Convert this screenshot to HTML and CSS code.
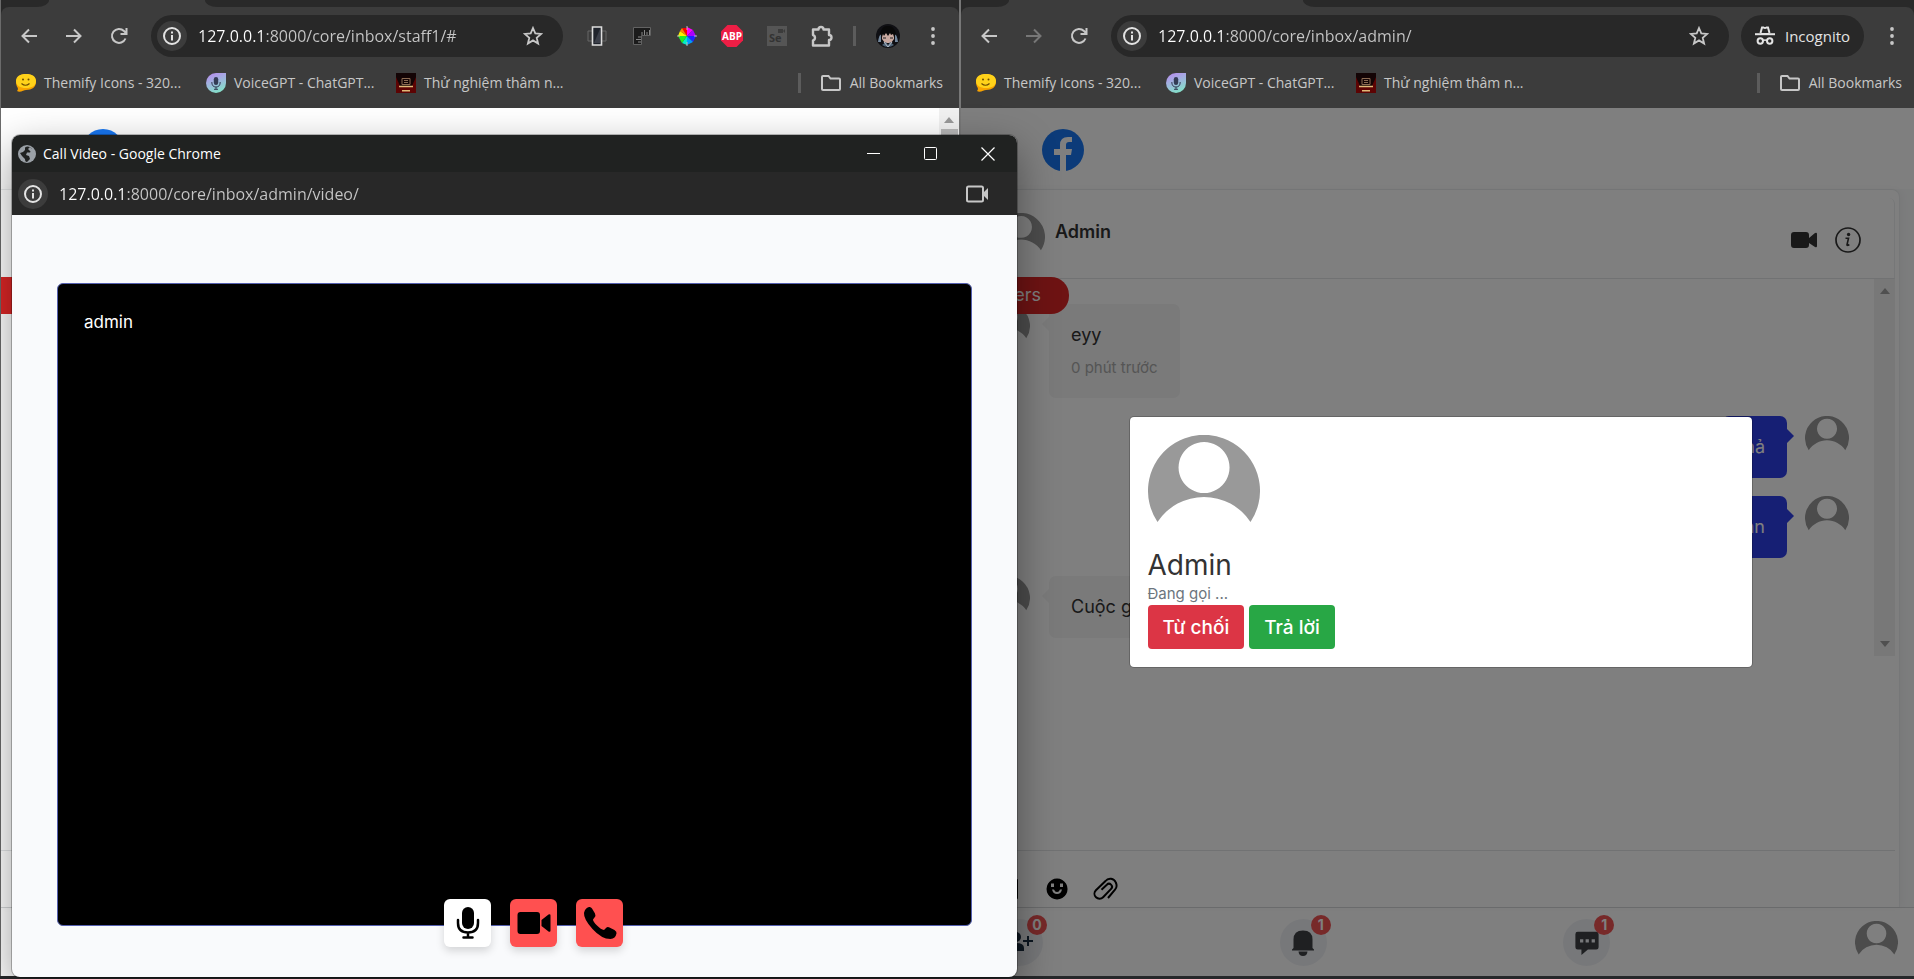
FILE: index.html
```html
<!DOCTYPE html>
<html lang="vi">
<head>
<meta charset="utf-8">
<title>Call Video</title>
<link rel="stylesheet" href="styles.css">
</head>
<body>
<svg class="sprite" aria-hidden="true">
  <symbol id="back" viewBox="0 0 20 20"><path d="M18 10H4M10 3.5 3.5 10l6.500 6.500" fill="none" stroke="currentColor" stroke-width="2"/></symbol>
  <symbol id="forward" viewBox="0 0 20 20"><path d="M2 10h14M10 3.500 16.500 10 10 16.500" fill="none" stroke="currentColor" stroke-width="2"/></symbol>
  <symbol id="reload" viewBox="0 0 20 20"><path d="M16.500 12.500A7 7 0 1 1 15 5l2 2M17.500 2v6h-6" fill="none" stroke="currentColor" stroke-width="2"/></symbol>
  <symbol id="info" viewBox="0 0 20 20"><circle cx="10" cy="10" r="8" fill="none" stroke="currentColor" stroke-width="2"/><path d="M9 9h2v5.500H9zM9 5.500h2v2H9z" fill="currentColor"/></symbol>
  <symbol id="star" viewBox="0 0 20 20"><path d="m10 2 2.300 5.400 5.900.5-4.500 3.900 1.400 5.700L10 14.400l-5.100 3.100 1.400-5.700L1.800 7.900l5.900-.5z" fill="none" stroke="currentColor" stroke-width="1.800"/></symbol>
  <symbol id="kebab" viewBox="0 0 20 20"><g fill="currentColor"><circle cx="10" cy="3" r="1.900"/><circle cx="10" cy="10" r="1.900"/><circle cx="10" cy="17" r="1.900"/></g></symbol>
  <symbol id="folder" viewBox="0 0 22 18"><path d="M3 2h5.500l2 2.500H19q1 0 1 1V15q0 1-1 1H3q-1 0-1-1V3q0-1 1-1z" fill="none" stroke="currentColor" stroke-width="2"/></symbol>
  <symbol id="puzzle" viewBox="0 0 24 24"><path d="M3 5.500h5.500a2.500 2.500 0 0 1 5 0h5.500v5.500a2.500 2.500 0 0 1 0 5v5.500H3v-5.200a2.700 2.700 0 0 0 0-5.200z" fill="none" stroke="currentColor" stroke-width="2.400" stroke-linejoin="round"/></symbol>
  <symbol id="smile" viewBox="0 0 20 20"><path d="M10 1c6 0 10 3 10 8s-4 8-10 8c-2 0-6 3-9 1 1-1 1-2 .8-3C.5 13 0 11 0 9c0-5 4-8 10-8z" fill="#f9a400"/><path d="M10 1c6 0 10 2.500 10 7s-4 7-10 7S0 12.500 0 8s4-7 10-7z" fill="#ffd21a"/><path d="M5.500 10.500q4 3.500 8 0" fill="none" stroke="#6b4a00" stroke-width="1.200"/><circle cx="7" cy="6.500" r="1" fill="#6b4a00"/><circle cx="12.500" cy="6.500" r="1" fill="#6b4a00"/></symbol>
  <symbol id="voice" viewBox="0 0 20 20"><linearGradient id="vg" x1="0" y1="0" x2=".4" y2="1"><stop stop-color="#bb86f2"/><stop offset="1" stop-color="#86dccb"/></linearGradient><path d="M10 0h10v10a10 10 0 1 1-10-10z" fill="url(#vg)"/><rect x="7.800" y="4" width="4.400" height="8" rx="2.200" fill="#333b55"/><path d="M5.800 9q0 5 4.200 5t4.200-5M10 14v2.500M8 16.300h4" fill="none" stroke="#333b55"/></symbol>
  <symbol id="scan" viewBox="0 0 20 20"><path fill="#5d0303" d="M0 0h20v20H0z"/><path fill="#130405" d="M0 0h20v4l-4 9H4L0 4z"/><path d="M6 5.500h8v6H6zM8 7.500h4M8 9.500h4" fill="none" stroke="#8a6a52"/><path d="M3 13.500h14M6 17.800h8" stroke="#e0b978" stroke-width="1.500"/></symbol>
  <symbol id="avatar" viewBox="0 0 112 112"><path fill="#999" fill-rule="evenodd" d="M9.500 87A56 56 0 1 1 102.500 87 55.700 55.700 0 0 0 9.500 87zM56 7a25.500 25.500 0 1 0 .1 0z"/></symbol>
  <symbol id="facebook" viewBox="0 0 42 42"><circle cx="21" cy="21" r="21" fill="#1877f2"/><path d="M18 42V26h-6v-6h6v-4q0-8 8-8h4v5h-3q-3 0-3 3v4h6l-1 6h-5v16z" fill="#fff"/></symbol>
  <symbol id="up" viewBox="0 0 10 6"><path d="M0 6 5 0l5 6z" fill="currentColor"/></symbol>
</svg>

<main class="desktop">
  <section class="window window-left" aria-label="staff1">
    <div class="tabs"><span class="tab-before"></span><span class="tab-after tab-after-near"></span></div>
    <div class="chrome">
      <div class="toolbar">
        <button class="icon-button" aria-label="Back"><svg><use href="#back"/></svg></button>
        <button class="icon-button" aria-label="Forward"><svg><use href="#forward"/></svg></button>
        <button class="icon-button" aria-label="Reload"><svg><use href="#reload"/></svg></button>
        <div class="omnibox">
          <button class="site-info" aria-label="Site information"><svg><use href="#info"/></svg></button>
          <input class="url" type="text" aria-label="Address" value="127.0.0.1:8000/core/inbox/staff1/#">
          <button class="bookmark-star" aria-label="Bookmark"><svg><use href="#star"/></svg></button>
        </div>
        <div class="extensions">
          <button class="icon-button" aria-label="Mobile view"><svg viewBox="0 0 20 20"><path d="M1 5h18v10H1z" fill="none" stroke="#666"/><path d="M5.500 1h9v18h-9z" fill="#20242c" stroke="#ddd" stroke-width="1.600"/><path d="m7 17 6-14v14z" fill="#3b3f49"/></svg></button>
          <button class="icon-button" aria-label="Ruler"><svg viewBox="0 0 20 20"><path d="M1.500 1.500h17v8h-9v9h-8z" fill="#1b1b1b" stroke="#626262"/><path d="M10 9V6m2.500 3V4M15 9V6m2.500 3V4M9 11H6m3 2.500H4M9 16H6" stroke="#888"/></svg></button>
          <button class="icon-button" aria-label="Color picker"><svg viewBox="0 0 20 20"><g><path fill="#f00" d="M10 10 5 2h5z"/><path fill="#f0f" d="M10 10V1l6 3z"/><path fill="#a0f" d="m10 10 6-6 3 6z"/><path fill="#22f" d="M10 10h9l-3 6z"/><path fill="#09f" d="m10 10 6 6-6 3z"/><path fill="#0ec" d="M10 10v9l-5-2z"/><path fill="#2e2" d="m10 10-5 7-4-7z"/><path fill="#fe0" d="M10 10H1l2-5z"/><path fill="#f80" d="M10 10 3 5l2-3z"/></g><path d="M10 0v4M10 16v4M0 10h3M17 10h3" stroke="#bbb"/></svg></button>
          <button class="icon-button" aria-label="Adblock"><svg class="abp" viewBox="0 0 22 22"><path d="M6.500 0h9L22 6.500v9L15.500 22h-9L0 15.500v-9z" fill="#ed1e45"/><text x="11" y="14.500" text-anchor="middle" class="abp-text">ABP</text></svg></button>
          <button class="icon-button" aria-label="Selenium"><svg viewBox="0 0 20 20"><path d="M0 0h20v20H0z" fill="#555"/><path d="M11 3h5v4h-5zM16 5l2-2v4z" fill="#3b3b3b"/><text x="2" y="16" class="se-text">Se</text></svg></button>
          <button class="icon-button" aria-label="Extensions"><svg class="puzzle"><use href="#puzzle"/></svg></button>
          <span class="tool-divider"></span>
          <button class="icon-button" aria-label="Profile"><svg class="profile" viewBox="0 0 24 24"><circle cx="12" cy="12" r="12" fill="#101014"/><path d="M2 18q1-7 3-8v8zM22 18q-1-7-3-8v8z" fill="#73879c"/><path d="M6 9h12v6l-3 4H9l-3-4z" fill="#c9a9a0"/><path d="M4 10q2-9 8-8 6-1 8 8l-2 3-1-3-2 1-1-2-2 3-2-3-2 3-1-2-1 3z" fill="#090909"/><path d="M7 14h3M14 14h3" stroke="#222"/><path d="m6 21 4-3 2 3 2-3 4 3q-6 4-12 0z" fill="#4f6478"/><path d="m8 18 4 5 4-5" fill="none" stroke="#b3bdc7"/></svg></button>
          <button class="icon-button" aria-label="Menu"><svg><use href="#kebab"/></svg></button>
        </div>
      </div>
      <nav class="bookmarks" aria-label="Bookmarks">
        <a class="bookmark" href="#"><svg><use href="#smile"/></svg>Themify Icons - 320...</a>
        <a class="bookmark" href="#"><svg><use href="#voice"/></svg>VoiceGPT - ChatGPT...</a>
        <a class="bookmark" href="#"><svg><use href="#scan"/></svg>Thử nghiệm thâm n...</a>
        <a class="all-bookmarks" href="#"><svg><use href="#folder"/></svg>All Bookmarks</a>
      </nav>
    </div>
    <div class="page">
      <header class="site-header"><svg class="logo"><use href="#facebook"/></svg></header>
      <div class="chat-card">
        <div class="chat-head"></div>
        <div class="ribbon"></div>
        <div class="chat-body"></div>
        <div class="composer"></div>
      </div>
      <div class="bottom-nav"></div>
      <div class="page-scroll"><svg><use href="#up"/></svg><span class="thumb"></span></div>
    </div>
  </section>

  <section class="window window-right" aria-label="admin">
    <div class="tabs"><span class="tab-before"></span><span class="tab-after tab-after-far"></span></div>
    <div class="chrome">
      <div class="toolbar">
        <button class="icon-button" aria-label="Back"><svg><use href="#back"/></svg></button>
        <button class="icon-button dim" aria-label="Forward"><svg><use href="#forward"/></svg></button>
        <button class="icon-button" aria-label="Reload"><svg><use href="#reload"/></svg></button>
        <div class="omnibox">
          <button class="site-info" aria-label="Site information"><svg><use href="#info"/></svg></button>
          <input class="url" type="text" aria-label="Address" value="127.0.0.1:8000/core/inbox/admin/">
          <button class="bookmark-star" aria-label="Bookmark"><svg><use href="#star"/></svg></button>
        </div>
        <button class="incognito"><svg viewBox="0 0 20 20"><path d="M5.500 7 7 1.500h1.500q1.500 1 3 0H13L14.500 7" fill="none" stroke="currentColor" stroke-width="2"/><path d="M0 8.200h20" stroke="currentColor" stroke-width="2"/><path d="M5.500 7h9v1h-9z" fill="currentColor"/><circle cx="5.300" cy="15" r="2.700" fill="none" stroke="currentColor" stroke-width="2"/><circle cx="14.700" cy="15" r="2.700" fill="none" stroke="currentColor" stroke-width="2"/><path d="M8 14.500q2-1 4 0" fill="none" stroke="currentColor" stroke-width="1.500"/></svg>Incognito</button>
        <button class="icon-button menu-end" aria-label="Menu"><svg><use href="#kebab"/></svg></button>
      </div>
      <nav class="bookmarks" aria-label="Bookmarks">
        <a class="bookmark" href="#"><svg><use href="#smile"/></svg>Themify Icons - 320...</a>
        <a class="bookmark" href="#"><svg><use href="#voice"/></svg>VoiceGPT - ChatGPT...</a>
        <a class="bookmark" href="#"><svg><use href="#scan"/></svg>Thử nghiệm thâm n...</a>
        <a class="all-bookmarks" href="#"><svg><use href="#folder"/></svg>All Bookmarks</a>
      </nav>
    </div>
    <div class="page">
      <header class="site-header"><svg class="logo"><use href="#facebook"/></svg></header>
      <div class="chat-card">
        <div class="chat-head">
          <svg class="head-avatar"><use href="#avatar"/></svg>
          <h2 class="chat-name">Admin</h2>
          <button class="head-action" aria-label="Video call"><svg viewBox="0 0 26 26"><path d="M3 5h12q3 0 3 3v10q0 3-3 3H3q-3 0-3-3V8q0-3 3-3zM18 11l6-5q2-1 2 1v12q0 2-2 1l-6-4z" fill="#333"/></svg></button>
          <button class="head-action" aria-label="Details"><svg viewBox="0 0 26 26"><circle cx="13" cy="13" r="12" fill="none" stroke="#333" stroke-width="1.700"/><circle cx="13.600" cy="7.500" r="1.700" fill="#333"/><path d="M10.500 11.300h3l-1.500 6.500q.2 1.200 2.300-.3" fill="none" stroke="#333" stroke-width="1.600"/></svg></button>
        </div>
        <div class="ribbon">Users</div>
        <div class="chat-body">
          <div class="messages">
            <div class="message">
              <svg class="message-avatar"><use href="#avatar"/></svg>
              <div class="bubble received"><p class="text">eyy</p><time class="time">0 phút trước</time></div>
            </div>
            <div class="message mine">
              <div class="bubble sent"><p class="text">hả</p></div>
              <svg class="message-avatar"><use href="#avatar"/></svg>
            </div>
            <div class="message mine">
              <div class="bubble sent"><p class="text">bạn</p></div>
              <svg class="message-avatar"><use href="#avatar"/></svg>
            </div>
            <div class="message">
              <svg class="message-avatar"><use href="#avatar"/></svg>
              <div class="bubble received"><p class="text">Cuộc gọi</p></div>
            </div>
          </div>
          <div class="message-scroll"><svg><use href="#up"/></svg><svg class="down"><use href="#up"/></svg></div>
        </div>
        <div class="composer">
          <button class="tool" aria-label="Picture"><svg viewBox="0 0 24 24"><path d="M3 2h17q1 0 1 1v18q0 1-1 1H3z"/></svg></button>
          <button class="tool" aria-label="Emoji"><svg viewBox="0 0 24 24"><path fill-rule="evenodd" d="M12 1.500a10.500 10.500 0 1 0 .1 0zM6 6.500h3V10H6zM15 6.500h3V10h-3zM7 12.500h2q1 2.500 3 2.500t3-2.500h2q-1 4.500-5 4.500t-5-4.500z"/></svg></button>
          <button class="tool clip" aria-label="Attach"><svg viewBox="0 0 26 24"><path d="M8.500 12.700l5.300-5a3 3 0 0 1 4.300 4.200l-8 8.300a5 5 0 0 1-7.200-7L12.500 4a6 6 0 0 1 10.300 1.500q2 4-.8 7.200L15 21" fill="none" stroke="#000" stroke-width="2"/></svg></button>
        </div>
      </div>
      <nav class="bottom-nav" aria-label="Main">
        <button class="nav-item" aria-label="Friend requests"><svg viewBox="0 0 26 26"><circle cx="9" cy="7" r="5" fill="#1b2f42"/><path d="M1 21v-3q0-5 8-5t8 5v3zM20 6h2v4h4v2h-4v4h-2v-4h-4v-2h4z" fill="#1b2f42"/></svg><span class="badge">0</span></button>
        <button class="nav-item" aria-label="Notifications"><svg viewBox="0 0 26 26"><path d="M3.500 18V9.500q0-9 9.500-9t9.500 9V18l1.500 1.500v1H2v-1zM8.500 21.500h9q-.5 4.500-4.500 4.500t-4.500-4.500z" fill="#3e4045"/></svg><span class="badge">1</span></button>
        <button class="nav-item" aria-label="Messages"><svg viewBox="0 0 26 28"><path fill-rule="evenodd" d="M3 2h20q2.500 0 2.500 2.500v14q0 2.500-2.500 2.500h-9l-7 6v-6H3q-2.500 0-2.500-2.500v-14Q.5 2 3 2zM5.500 10v3.500H9V10zM11.500 10v3.500H15V10zM18 10v3.500h3.500V10z" fill="#3e4045"/></svg><span class="badge">1</span></button>
        <button class="nav-avatar" aria-label="Account"><svg><use href="#avatar"/></svg></button>
      </nav>
      <div class="overlay">
        <div class="modal" role="dialog" aria-label="Incoming call">
          <svg class="caller-avatar"><use href="#avatar"/></svg>
          <h1 class="caller">Admin</h1>
          <p class="calling">Đang gọi ...</p>
          <div class="modal-actions">
            <button class="decision decline">Từ chối</button>
            <button class="decision accept">Trả lời</button>
          </div>
        </div>
      </div>
    </div>
  </section>

  <section class="popup" aria-label="Call Video">
    <div class="popup-title">
      <svg class="globe" viewBox="0 0 18 18"><circle cx="9" cy="9" r="9" fill="#9aa0a6"/><path d="M9 1.500q4 0 5 3l-2 3H9L8 10l3 1 1 3-3 3q-2 0-2-3l-3-3-2-3 3-1 2-2V2.500z" fill="#202221"/><path d="m10 4 2-2 3 3-2 2z" fill="#9aa0a6"/></svg>
      <span class="popup-name">Call Video - Google Chrome</span>
      <button class="window-button" aria-label="Minimize"><svg viewBox="0 0 14 14"><path d="M0 6.500h13" stroke="#fff"/></svg></button>
      <button class="window-button" aria-label="Maximize"><svg viewBox="0 0 14 14"><rect x=".5" y=".5" width="12" height="12" rx="1" fill="none" stroke="#fff"/></svg></button>
      <button class="window-button" aria-label="Close"><svg viewBox="0 0 14 14"><path d="m.5.5 13 13M13.500.5l-13 13" stroke="#fff" stroke-width="1.200"/></svg></button>
    </div>
    <div class="popup-address">
      <button class="site-info" aria-label="Site information"><svg><use href="#info"/></svg></button>
      <input class="url" type="text" aria-label="Popup address" value="127.0.0.1:8000/core/inbox/admin/video/">
      <button class="camera" aria-label="Camera"><svg viewBox="0 0 22 18"><rect x="1" y="1.500" width="16" height="15" rx="1.500" fill="none" stroke="currentColor" stroke-width="2"/><path d="m17 8 5-5v12l-5-5z" fill="currentColor"/></svg></button>
    </div>
    <div class="call">
      <div class="video"><span class="participant">admin</span></div>
      <div class="call-controls">
        <button class="call-button" aria-label="Microphone"><svg viewBox="0 0 34 34"><rect x="11" y="1" width="12" height="22" rx="6"/><path d="M7 14v3q0 9.500 10 9.500T27 17v-3M17 26.500V31M12.500 31.500h9" fill="none" stroke="#000" stroke-width="2.500" stroke-linecap="round"/></svg></button>
        <button class="call-button alert" aria-label="Camera off"><svg viewBox="0 0 34 34"><path d="M3.500 6H20q3 0 3 3v16q0 3-3 3H3.500q-3 0-3-3V9q0-3 3-3zM24.500 14l7-5.500q2-1 2 1v15q0 2-2 1l-7-5.500z"/></svg></button>
        <button class="call-button alert" aria-label="Hang up"><svg viewBox="0 0 34 34"><path d="M1 7q1-5 5-6 2-.4 3 1.500l3 5q1 2-.5 4L10 13.500q0 2 4 6t7 4.500l2-2q1.500-1.500 3.500-.5l5 2.500q2.500 1.500 2 3.500-1 5-6 5.500-9 0-18-10T1 7z"/></svg></button>
      </div>
    </div>
  </section>
</main>
</body>
</html>
```

FILE: styles.css
```css
* { box-sizing: border-box; }

body {
  margin: 0;
  background: #26282a;
  font-family: Inter, "Liberation Sans", sans-serif;
  font-size: 18px;
}

button {
  padding: 0;
  border: 0;
  background: none;
  color: inherit;
  font: inherit;
}

svg { display: block; flex: none; }
p, h1, h2 { margin: 0; }
.sprite { position: absolute; width: 0; height: 0; }

.desktop {
  position: relative;
  display: grid;
  grid-template-columns: 961fr 953fr;
  height: 100vh;
  padding-bottom: 3px;
  overflow: hidden;
}

.window {
  display: flex;
  flex-direction: column;
  min-width: 0;
  background: #292929;
}
.window-left {
  border-left: 1px solid #6b6b6b;
  border-right: 2px solid #777;
}

/* Browser frame */
.tabs {
  display: flex;
  justify-content: space-between;
  height: 7px;
  background: #3c3c3c;
}
.tab-before {
  width: 48px;
  background: #292929;
  border-bottom-right-radius: 12px 7px;
}
.tab-after {
  background: #292929;
  border-bottom-left-radius: 12px 7px;
}
.tab-after-near { width: calc(100% - 204px); }
.tab-after-far { width: calc(100% - 342px); }

.chrome {
  height: 101px;
  background: #3c3c3c;
  border-radius: 8px 8px 0 0;
  color: #c7c7c7;
  font-family: "Open Sans", "Noto Sans", sans-serif;
}
.toolbar {
  display: flex;
  align-items: center;
  height: 58px;
  padding-left: 5px;
}
.icon-button {
  display: grid;
  place-items: center;
  flex: none;
  width: 45px;
  height: 42px;
}
.icon-button svg { width: 20px; height: 20px; }
.icon-button .abp { width: 22px; height: 22px; }
.icon-button .puzzle,
.icon-button .profile { width: 24px; height: 24px; }
.abp-text { fill: #fff; font-size: 10px; font-weight: 700; }
.se-text { fill: #333; font-size: 11px; font-weight: 700; }
.dim { color: #777; }

.omnibox {
  display: flex;
  align-items: center;
  flex: 1;
  min-width: 0;
  height: 42px;
  margin-left: 10px;
  padding: 0 20px 0 6px;
  border-radius: 21px;
  background: #282828;
}
.site-info {
  display: grid;
  place-items: center;
  flex: none;
  width: 30px;
  height: 30px;
  border-radius: 50%;
  background: #3c3c3c;
  color: #e3e3e3;
}
.site-info svg { width: 20px; height: 20px; }
.url {
  flex: 1;
  min-width: 0;
  margin-left: 11px;
  padding: 0;
  border: 0;
  outline: 0;
  color: #c7c7c7;
  background: linear-gradient(to right, #fff 66px, #c7c7c7 66px);
  background-clip: text;
  -webkit-background-clip: text;
  -webkit-text-fill-color: transparent;
  font-family: "Open Sans", "Noto Sans", sans-serif;
  font-size: 16px;
  line-height: 24px;
}
.bookmark-star svg { width: 20px; height: 20px; }
.extensions {
  display: flex;
  align-items: center;
  padding: 0 4px 0 11px;
}
.tool-divider {
  width: 3px;
  height: 20px;
  margin: 0 9px;
  background: #5c5c5c;
}
.incognito {
  display: flex;
  align-items: center;
  justify-content: center;
  gap: 10px;
  width: 123px;
  height: 42px;
  margin-left: 12px;
  border-radius: 21px;
  background: #282828;
  color: #e3e3e3;
  font-size: 15px;
}
.incognito svg { width: 20px; height: 20px; }
.menu-end { width: 50px; padding-left: 6px; }

.bookmarks {
  display: flex;
  align-items: center;
  height: 36px;
  padding: 0 12px 0 15px;
}
.window-left .bookmarks { padding-right: 16px; }
.bookmark,
.all-bookmarks {
  display: flex;
  align-items: center;
  gap: 8px;
  color: #c7c7c7;
  font-size: 14px;
  line-height: 20px;
  text-decoration: none;
  white-space: nowrap;
}
.bookmark { width: 190px; }
.bookmark svg { width: 20px; height: 20px; }
.all-bookmarks {
  margin-left: auto;
  padding-left: 19px;
  border-left: 3px solid #5c5c5c;
}
.all-bookmarks svg { width: 22px; height: 18px; }

/* Messenger page */
.page {
  position: relative;
  display: flex;
  flex-direction: column;
  flex: 1;
  min-height: 0;
  background: #f9fafb;
}
.site-header {
  height: 81px;
  padding: 21px 81px 0;
  background: #fff;
}
.logo { width: 42px; height: 42px; }
.chat-card {
  position: relative;
  display: flex;
  flex-direction: column;
  flex: 1;
  min-height: 0;
  margin-right: 14px;
  padding-right: 4px;
  border-top: 1px solid #e9ebec;
  border-right: 1px solid #eceef0;
  border-radius: 0 8px 0 0;
  background: #fff;
  box-shadow: 2px 0 8px rgba(0, 0, 0, .04);
}
.chat-head {
  display: flex;
  gap: 10px;
  height: 81px;
  margin-top: 8px;
  padding: 15px 33px 0 36px;
  border-right: 1px solid #eceef0;
  border-bottom: 1px solid #e3e5e7;
  border-radius: 0 6px 0 0;
}
.head-avatar { width: 48px; height: 48px; }
.chat-name {
  flex: 1;
  margin-top: 6px;
  color: #333;
  font-size: 18px;
  font-weight: 600;
  line-height: 26px;
}
.head-action {
  width: 26px;
  height: 26px;
  margin: 14px 0 0 8px;
}
.head-action svg { width: 26px; height: 26px; }
.ribbon {
  position: absolute;
  z-index: 1;
  top: 87px;
  left: 0;
  width: 108px;
  height: 37px;
  padding-right: 28px;
  border-radius: 0 18px 18px 0;
  background: #dc2626;
  color: #fff;
  line-height: 35px;
  text-align: right;
}
.chat-body {
  display: flex;
  align-items: flex-start;
  flex: 1;
  min-height: 0;
}
.messages {
  display: flex;
  flex-direction: column;
  gap: 18px;
  flex: 1;
  min-width: 0;
  padding: 25px 25px 0;
}
.message { display: flex; gap: 19px; }
.mine { justify-content: flex-end; gap: 18px; }
.message-avatar { width: 44px; height: 44px; }
.bubble {
  position: relative;
  padding: 18px 22px;
  border-radius: 7px;
  line-height: 26px;
}
.bubble::before {
  content: "";
  position: absolute;
  top: 13px;
  border: 7px solid transparent;
}
.received { background: #f4f4f4; color: #333; }
.received::before { right: 100%; border-right-color: #f4f4f4; border-left: 0; }
.sent { background: #2c3ee8; color: #fff; }
.sent::before { left: 100%; border-left-color: #2c3ee8; border-right: 0; }
.time {
  display: block;
  margin-top: 8px;
  color: #aaa;
  font-size: 15px;
  line-height: 24px;
}
.message-scroll {
  display: flex;
  flex-direction: column;
  align-items: center;
  justify-content: space-between;
  width: 21px;
  height: 66%;
  padding: 9px 0;
  background: #f0f0f0;
  color: #a0a0a0;
}
.message-scroll svg,
.page-scroll svg { width: 10px; height: 6px; }
.down { transform: rotate(180deg); }
.composer {
  display: flex;
  gap: 24px;
  height: 57px;
  padding: 26px 0 0 36px;
  border-top: 1px solid #e3e5e7;
}
.tool { width: 24px; height: 24px; }
.tool svg { width: 24px; height: 24px; }
.clip { width: 26px; }
.clip svg { width: 26px; }

.bottom-nav {
  display: flex;
  justify-content: space-between;
  height: 69px;
  padding: 11px 16px 0 35px;
  border-top: 1px solid #d8dadc;
  background: #fff;
}
.nav-item {
  position: relative;
  display: grid;
  place-items: center;
  width: 47px;
  height: 47px;
  border-radius: 50%;
  background: #eff1f5;
}
.nav-item svg { width: 26px; height: 26px; }
.badge {
  position: absolute;
  top: -4px;
  right: -4px;
  width: 20px;
  height: 20px;
  border-radius: 50%;
  background: #ee5253;
  color: #fff;
  font-size: 14px;
  font-weight: 700;
  line-height: 20px;
  text-align: center;
}
.nav-avatar {
  display: flex;
  justify-content: flex-end;
  width: 51px;
  height: 47px;
}
.nav-avatar svg { width: 43px; height: 43px; margin-top: 2px; }

.page-scroll {
  position: absolute;
  inset: 0 0 0 auto;
  display: flex;
  flex-direction: column;
  align-items: center;
  width: 20px;
  padding-top: 9px;
  background: #f1f1f1;
  color: #999;
}
.thumb {
  width: 17px;
  height: 70%;
  margin-top: 6px;
  background: #b8b8b8;
}

/* Incoming call */
.overlay {
  position: absolute;
  z-index: 2;
  inset: 0;
  display: flex;
  align-items: center;
  justify-content: center;
  padding-left: 6px;
  background: rgba(0, 0, 0, .5);
}
.modal {
  width: 66%;
  max-width: 624px;
  padding: 18px;
  border: 1px solid rgba(0, 0, 0, .2);
  border-radius: 5px;
  background: #fff;
  background-clip: padding-box;
}
.caller-avatar { width: 112px; height: 112px; }
.caller {
  color: #333;
  font-size: 28px;
  font-weight: 400;
  line-height: 36px;
}
.calling {
  color: #6c757d;
  font-size: 15px;
  line-height: 22px;
}
.modal-actions { display: flex; gap: 5px; }
.decision {
  height: 44px;
  padding: 0 15px;
  border-radius: 4px;
  color: #fff;
  font-size: 19px;
  font-weight: 500;
}
.decline { background: #dc3545; }
.accept { background: #28a745; }

/* Call window */
.popup {
  position: absolute;
  z-index: 3;
  top: 135px;
  bottom: 2px;
  left: 12px;
  display: flex;
  flex-direction: column;
  width: 52.5%;
  overflow: hidden;
  border-radius: 8px;
  background: #f9fafc;
  box-shadow: 0 0 0 1px rgba(0, 0, 0, .25), 0 14px 40px rgba(0, 0, 0, .4);
}
.popup-title {
  display: flex;
  align-items: center;
  height: 37px;
  padding-left: 6px;
  background: #202221;
}
.globe { width: 18px; height: 18px; }
.popup-name {
  flex: 1;
  margin-left: 7px;
  color: #fff;
  font-family: "Open Sans", "Noto Sans", sans-serif;
  font-size: 14px;
}
.window-button {
  display: grid;
  place-items: center;
  width: 57px;
  height: 37px;
}
.window-button svg { width: 14px; height: 14px; }
.popup-address {
  display: flex;
  align-items: center;
  height: 43px;
  padding: 0 29px 0 6px;
  background: #282828;
  color: #c7c7c7;
}
.camera svg { width: 22px; height: 18px; }
.call {
  position: relative;
  display: flex;
  flex: 1;
  padding: 68px 45px 51px;
}
.video {
  flex: 1;
  padding: 25px 26px;
  border: 1px solid #5560b0;
  border-radius: 6px;
  background: #000;
}
.participant { color: #fff; font-size: 17px; line-height: 26px; }
.call-controls {
  position: absolute;
  bottom: 30px;
  left: 43%;
  display: flex;
  gap: 19px;
}
.call-button {
  display: grid;
  place-items: center;
  width: 47px;
  height: 48px;
  border-radius: 6px;
  background: #fff;
  box-shadow: 0 4px 8px rgba(0, 0, 0, .15);
}
.alert { background: #ff5050; }
.call-button svg { width: 34px; height: 34px; }
```
